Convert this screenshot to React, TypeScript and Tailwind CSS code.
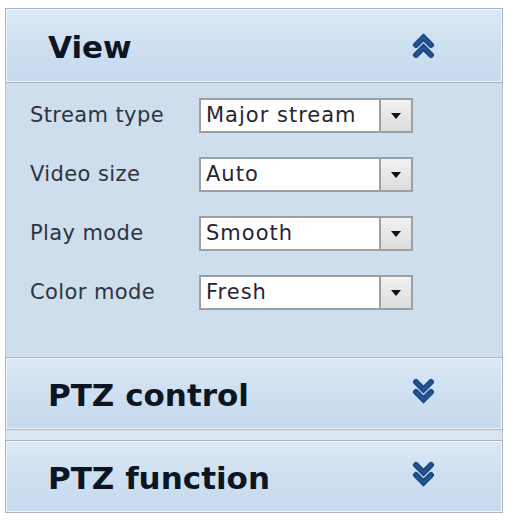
import React from "react";

type Dir = "up" | "down";

function DoubleChevron({ dir }: { dir: Dir }) {
  const d =
    dir === "up"
      ? "M4 12 L11.5 4.5 L19 12 M4 22 L11.5 14.5 L19 22"
      : "M4 4 L11.5 11.5 L19 4 M4 14 L11.5 21.5 L19 14";
  return (
    <svg
      width="23"
      height="26"
      viewBox="0 0 23 26"
      className={`shrink-0 ${dir === "down" ? "-translate-y-[3px]" : ""}`}
    >
      <path
        d={d}
        fill="none"
        stroke="#1b4a86"
        strokeWidth={6}
        strokeLinecap="round"
        strokeLinejoin="miter"
      />
      <path
        d={d}
        fill="none"
        stroke="#3c6aa4"
        strokeWidth={1.5}
        strokeLinecap="round"
        opacity={0.5}
      />
    </svg>
  );
}

function PanelHeader({
  title,
  dir,
  className = "",
}: {
  title: string;
  dir: Dir;
  className?: string;
}) {
  return (
    <div
      className={`flex items-center justify-between border border-[#aab4bf] bg-gradient-to-b from-[#dde9f5] via-[#cddff0] to-[#c6dbee] pl-[42px] pr-[67px] shadow-[inset_0_0_0_1px_#eef5fb] ${className}`}
    >
      <span className="translate-y-[2px] text-[31px] font-bold leading-none text-[#0c1522] [font-family:'DejaVu_Sans',Verdana,sans-serif]">
        {title}
      </span>
      <DoubleChevron dir={dir} />
    </div>
  );
}

function Select({ value }: { value: string }) {
  return (
    <div className="flex h-[35px] w-[214px] border-2 border-[#9aa0a6] bg-white">
      <div className="flex flex-1 items-center pl-[5px] text-[21px] tracking-[1px] text-[#2a2430]">
        {value}
      </div>
      <div className="flex w-[32px] items-center justify-center border-l-2 border-[#9aa0a6] bg-gradient-to-b from-[#f2f2f2] to-[#dcdcdc]">
        <svg width="10" height="6" viewBox="0 0 10 6">
          <path d="M0 0 L10 0 L5 6 Z" fill="#111" />
        </svg>
      </div>
    </div>
  );
}

const rows = [
  { label: "Stream type", value: "Major stream" },
  { label: "Video size", value: "Auto" },
  { label: "Play mode", value: "Smooth" },
  { label: "Color mode", value: "Fresh" },
];

export default function App() {
  return (
    <div className="h-[520px] w-[509px] bg-white pl-[5px] pt-[8px] [font-family:'DejaVu_Sans',Verdana,sans-serif]">
      <div className="w-[498px]">
        <PanelHeader title="View" dir="up" className="h-[75px]" />

        <div className="flex flex-col gap-[24px] border-x border-[#b8c4d0] bg-[#cfdeed] pb-[47px] pl-[24px] pt-[15px]">
          {rows.map((r) => (
            <div key={r.label} className="flex items-center">
              <span className="w-[169px] text-[21px] tracking-[0.4px] text-[#2d3440]">
                {r.label}
              </span>
              <Select value={r.value} />
            </div>
          ))}
        </div>

        <PanelHeader title="PTZ control" dir="down" className="h-[73px]" />
        <div className="h-[10px] border-x border-[#b8c4d0] bg-[#dbe5ef]" />
        <PanelHeader title="PTZ function" dir="down" className="h-[73px]" />
      </div>
    </div>
  );
}
